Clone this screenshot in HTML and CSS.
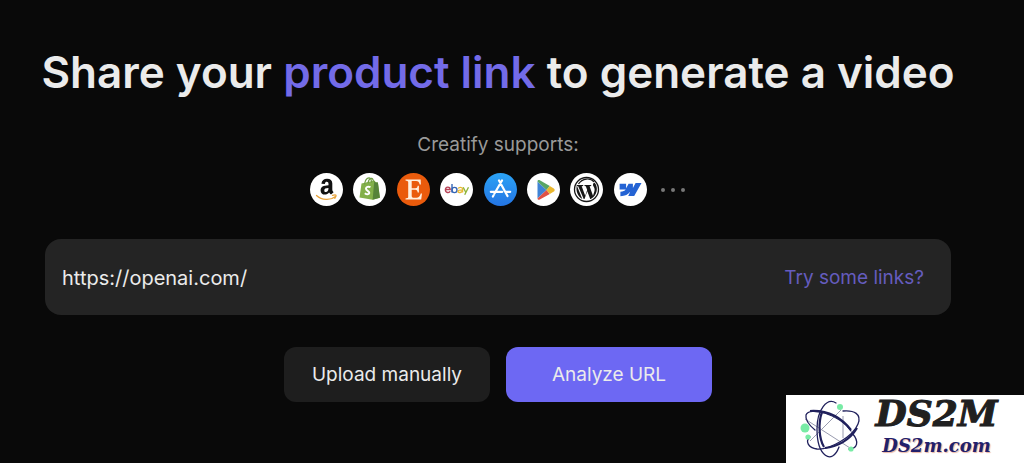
FILE: index.html
```html
<!DOCTYPE html>
<html lang="en">
<head>
  <meta charset="UTF-8">
  <meta name="viewport" content="width=device-width, initial-scale=1.0">
  <title>Creatify</title>
  <link rel="stylesheet" href="styles.css">
</head>
<body>
  <main class="container">
    <h1>Share your <span class="accent">product link</span> to generate a video</h1>

    <p class="supports">Creatify supports:</p>
    <ul class="platforms">
      <li>
        <svg viewBox="0 0 33 33" role="img" aria-label="Amazon">
          <circle cx="16.5" cy="16.5" r="16.5" fill="#fff"/>
          <path d="M11.400 10.800C11.800 7.400 14 5.700 17 5.700c3.500 0 5.300 1.700 5.300 4.700v5.800c0 1.400.5 2 1.300 3l-2.600 2.400c-.8-.6-1.400-1.300-1.900-2.100-1.300 1.500-2.600 2.100-4.200 2.100-2.600 0-4.300-1.500-4.300-4.200 0-3.400 2.600-4.900 7.900-5.100v-1.200c0-1.500-.6-2.300-1.800-2.300-1 0-1.600.6-1.800 2.300zM18.500 15c-2.900 0-4.200.7-4.200 2.400 0 1.100.6 1.700 1.500 1.700 1.600 0 2.700-1.500 2.700-4.100z" fill="#111"/>
          <path d="M6.500 22.500c5.500 5 14 5 18.600 1.200M22.500 22.300c1.800-.4 3.300-.5 3.500 0s-.3 1.900-1.200 3" fill="none" stroke="#e8a33a" stroke-width="1.300" stroke-linecap="round"/>
        </svg>
      </li>
      <li>
        <svg viewBox="0 0 33 33" role="img" aria-label="Shopify">
          <circle cx="16.5" cy="16.500" r="16.500" fill="#fff"/>
          <path d="M8.500 10.500l13-3 1.200 1.800 2.200.3 2 15.200-7.300 2L6.500 24.500z" fill="#83b04a"/>
          <path d="M21.300 8l1.400 1.400 2.200.2 2 15.200-7.300 2z" fill="#56833a"/>
          <path d="M11.500 11.500c.5-4 2.500-6.500 4.500-6.700 1.800-.1 2.500 2 2.500 5M15 10c.7-3.200 2-4.700 3.600-4.600 1.200.2 1.700 1.700 2 3.300" fill="none" stroke="#6f9d42" stroke-width="1.200"/>
          <path d="M17.500 14.200c-2.300-1.200-4.500-.2-4.500 1.500 0 2.300 3.500 2.100 3.300 4.300-.2 1.700-2.500 1.800-4.500.3" fill="none" stroke="#fff" stroke-width="2"/>
        </svg>
      </li>
      <li>
        <svg viewBox="0 0 33 33" role="img" aria-label="Etsy">
          <circle cx="16.5" cy="16.5" r="16.5" fill="#ea5b0c"/>
          <path d="M8.500 6.500h15.200l.2 5h-1.200c-.7-2.600-1.400-3.500-3.500-3.500h-4.500v7.300h3.600c1.600 0 2-.7 2.400-2.500h1.200v6.700h-1.200c-.3-1.900-.8-2.700-2.400-2.700h-3.600v6c0 1.500.6 2 2.300 2h2.500c2.200 0 3.200-1.300 4.300-4.200h1.200l-.8 5.900H8.500v-1l1.700-.4c.7-.2 1-.5 1-1.300V9.200c0-.8-.3-1.200-1-1.300l-1.700-.3z" fill="#fff0df"/>
        </svg>
      </li>
      <li>
        <svg viewBox="0 0 33 33" role="img" aria-label="eBay">
          <circle cx="16.500" cy="16.500" r="16.500" fill="#fff"/>
          <g fill="none" stroke-width="1.400">
            <path d="M5.500 16.500h4.700c-.1-3.200-4.800-3.300-4.800.3 0 3.300 4 3.500 4.700 1.300" stroke="#b84458"/>
            <path d="M12 11v8.500" stroke="#3565b5"/>
            <ellipse cx="14.500" cy="17" rx="2.500" ry="2.600" stroke="#3565b5"/>
            <path d="M18.300 15.700c.4-1.800 4.300-1.800 4.300.3v3.600M22.500 16.900c-3 0-4.500.4-4.500 1.500 0 1.700 4.500 1.500 4.500-.8" stroke="#e8b832"/>
            <path d="M23.200 14.300l2.500 5M28.500 14.300l-3.800 7.500" stroke="#91b63d"/>
          </g>
        </svg>
      </li>
      <li>
        <svg viewBox="0 0 33 33" role="img" aria-label="App Store">
          <defs>
            <linearGradient id="store" x1="0" y1="0" x2="0" y2="1">
              <stop offset="0" stop-color="#2ba3f5"/>
              <stop offset="1" stop-color="#2475e4"/>
            </linearGradient>
          </defs>
          <circle cx="16.500" cy="16.500" r="16.500" fill="url(#store)"/>
          <path d="M15 7.500l8.500 15.500M18 7.500l-7.500 13M9.600 22.300l-.7 1.200M6.800 18.800h11.500M21.500 18.800h4.700" fill="none" stroke="#fff" stroke-width="2.200" stroke-linecap="round"/>
        </svg>
      </li>
      <li>
        <svg viewBox="0 0 33 33" role="img" aria-label="Google Play">
          <circle cx="16.500" cy="16.500" r="16.500" fill="#fff"/>
          <path d="M10.500 8.500v17l9-8.500z" fill="#3f83d5"/>
          <path d="M10.500 8.500c.1-1.400 1.200-1.700 2.300-1.200l10 5.700-3.300 4z" fill="#58a564"/>
          <path d="M10.500 25.500c.1 1.300 1.200 1.500 2.300.9l10-5.400-3.300-4z" fill="#df5145"/>
          <path d="M22.800 13l4 2.400c1.200.8 1.200 2.300 0 3.100L22.800 21l-3.300-4z" fill="#eab72e"/>
        </svg>
      </li>
      <li>
        <svg viewBox="0 0 33 33" role="img" aria-label="WordPress">
          <circle cx="16.500" cy="16.500" r="16.500" fill="#fff"/>
          <circle cx="16.500" cy="16.500" r="12" fill="none" stroke="#171717" stroke-width="1.300"/>
          <path d="M6.700 12h6.500v1l-1.500.2 3.500 9.500 2-5.800-1.400-3.700-1.300-.2v-1h6.700v1l-1.600.2 3.400 9.500 1.400-4.500c1.100-3.300-1.700-4.600-1.400-6.600.1-1.400 1.100-2 1.900-1.700 3.500 4.600 2.500 12.300-4.200 16.100h-.5l-2.900-7.800-2.800 7.800h-.8L8.200 13.200l-1.500-.2z" fill="#171717"/>
          <path d="M6.800 12.500C5.500 18.500 8 23.500 12.300 26z" fill="#171717"/>
          <path d="M8.500 11c3.800-6 12-6.500 15.500-2" fill="none" stroke="#171717" stroke-width="1.200"/>
        </svg>
      </li>
      <li>
        <svg viewBox="0 0 33 33" role="img" aria-label="Webflow">
          <circle cx="16.500" cy="16.500" r="16.500" fill="#fff"/>
          <path d="M27.500 10l-7.300 13h-6l2-4.300c-2 2.700-5 4.200-9.800 4.600v-4.600c2.700-.2 4.200-.9 5.300-2.300H5.600V10.800h6.500v4.400l2.500-4.400h4.300v4.300l2.700-5.100z" fill="#2463d4"/>
        </svg>
      </li>
      <li class="more">
        <svg viewBox="0 0 24 4" role="img" aria-label="More">
          <circle cx="2" cy="2" r="2"/><circle cx="12" cy="2" r="2"/><circle cx="22" cy="2" r="2"/>
        </svg>
      </li>
    </ul>

    <form class="link-form">
      <div class="url-box">
        <input type="text" aria-label="Product link" value="https://openai.com/">
        <a href="#">Try some links?</a>
      </div>
      <div class="actions">
        <button type="button" class="btn">Upload manually</button>
        <button type="submit" class="btn btn-primary">Analyze URL</button>
      </div>
    </form>
  </main>

  <div class="watermark">
    <svg class="atom" viewBox="0 0 60 62" aria-hidden="true">
      <g fill="none" stroke="#999baf" stroke-width="1">
        <path d="M4 21L49 50M40 12L9 43M42 18v22"/>
      </g>
      <g fill="none" stroke="#20205c" stroke-width="1.300" stroke-linecap="round">
        <path d="M35 5C26-1 16 12 16 31c0 27 15 37 22 18"/>
        <path d="M50 33C38 16 8 8 5 17c-1 5 3 10 9 15"/>
        <path d="M42 13c11-1 19 3 15 13-5 13-29 26-41 25-9-1-12-8-7-12"/>
        <path d="M51 35c8 9 5 16-3 16"/>
      </g>
      <g fill="none" stroke="#20205c" stroke-width="2.200">
        <path d="M21 14c-4 11-3 27 2 35M24 50c12-1 25-8 32-20M9 13c17-1 31 6 41 19"/>
      </g>
      <g fill="#78eba5">
        <circle cx="4" cy="30" r="4.500"/><circle cx="39" cy="9" r="3"/>
        <circle cx="7" cy="39" r="2.600"/><circle cx="50" cy="51" r="2.600"/>
      </g>
    </svg>
    <div class="watermark-text">
      <strong>DS2M</strong>
      <span>DS2m.com</span>
    </div>
  </div>
</body>
</html>
```

FILE: styles.css
```css
* { margin: 0; padding: 0; box-sizing: border-box; }
body { background: #090909; color: #ebebeb; font-family: 'Inter', sans-serif; font-size: 19px; line-height: 24px; min-height: 100vh; position: relative; }
.container { padding: 42px 73px 60px 45px; }
h1 { font-size: 44px; line-height: 60px; font-weight: 600; display: flex; justify-content: center; white-space: pre; }
.accent { color: #736be8; }
.supports { color: #999; text-align: center; margin-top: 31px; }
.platforms { list-style: none; display: flex; justify-content: space-between; align-items: center; width: 376px; margin: 16px auto 0; padding-right: 1px; }
.platforms li { width: 33px; height: 33px; }
.platforms svg { display: block; width: 100%; }
.platforms .more { width: 28px; height: auto; padding-left: 4px; fill: #777; }
.link-form { margin-top: 33px; }
.url-box { background: #242424; border-radius: 16px; height: 76px; padding: 2px 27px 0 17px; display: flex; align-items: center; gap: 16px; }
.url-box input { flex: 1; min-width: 0; background: none; border: none; outline: none; color: #ebebeb; font: inherit; font-size: 20px; }
.url-box a { color: #655cbe; text-decoration: none; }
.actions { display: flex; justify-content: center; gap: 16px; margin-top: 32px; }
.btn { width: 206px; height: 55px; border: none; border-radius: 12px; background: #1e1e1e; color: #ebebeb; font: inherit; cursor: pointer; }
.btn-primary { background: #6d68f3; }
.watermark { position: absolute; right: 0; bottom: 0; width: 238px; height: 68px; background: #fff; display: flex; align-items: flex-start; gap: 4px; padding-left: 15px; }
.atom { width: 60px; height: 62px; flex: none; align-self: center; overflow: visible; }
.watermark-text { flex: 1; display: flex; flex-direction: column; align-items: center; gap: 3px; font-family: 'DejaVu Serif', serif; font-style: italic; padding-right: 16px; }
.watermark-text strong { color: #202020; font-size: 36px; line-height: 36px; -webkit-text-stroke: 1px #202020; }
.watermark-text span { color: #22206b; font-size: 18px; line-height: 24px; font-weight: bold; text-shadow: 1px 1px 1px #e9b2a0; }
```
